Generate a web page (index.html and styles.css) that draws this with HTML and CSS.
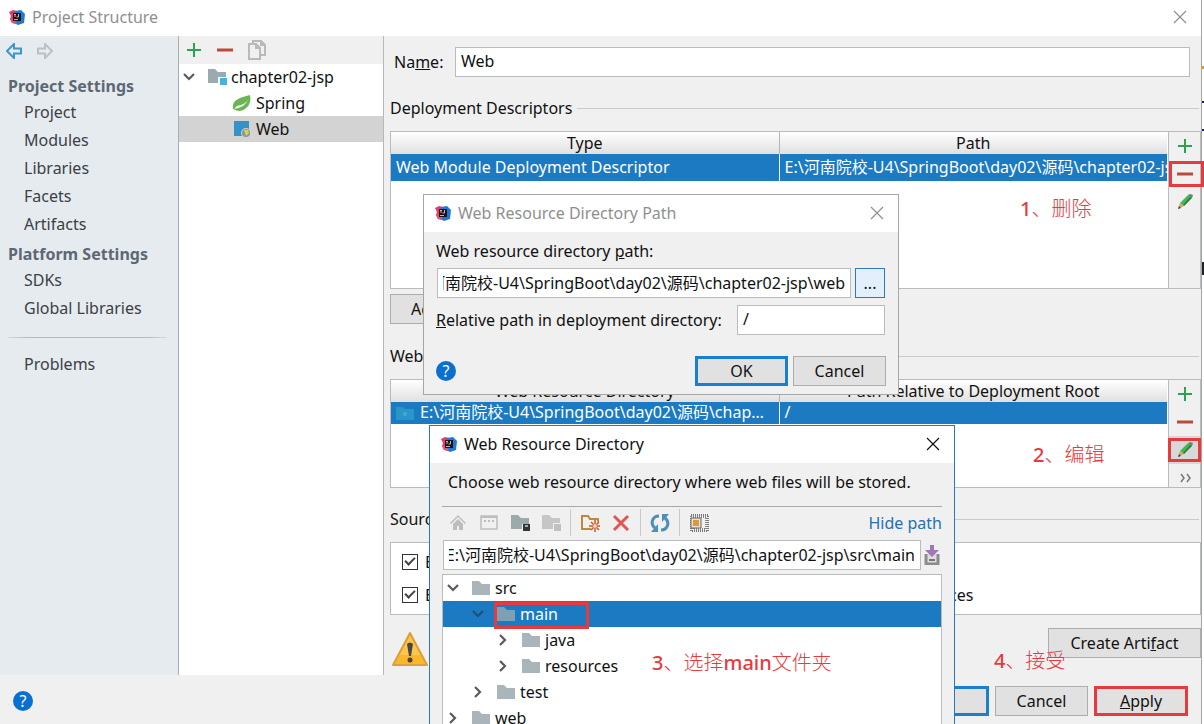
FILE: index.html
```html
<!DOCTYPE html>
<html lang="en">
<head>
<meta charset="utf-8">
<title>Project Structure</title>
<link rel="stylesheet" href="styles.css">
</head>
<body>
<svg class="sprite" aria-hidden="true">
  <symbol id="logo" viewBox="0 0 16 16">
    <path d="M0 3l4-2 4 1v13l-5-1-2-4 1-3z" fill="#e8386d"/>
    <path d="M6 2l6-1 4 4-1 9-6 2-4-2z" fill="#1f78d8"/>
    <path d="M1 10l4-1 3 6-5-1z" fill="#d8577c"/>
    <path d="M4 4h8v8H4z" fill="#1b1416"/>
    <path d="M5 5.500h2M6 5v3M9.500 5v3h-2M5 10.500h4" stroke="#c9b3a5" fill="none"/>
  </symbol>
  <symbol id="close" viewBox="0 0 14 14"><path d="M1 1l12 12M13 1L1 13" stroke="currentColor" stroke-width="1.2" fill="none"/></symbol>
  <symbol id="plus" viewBox="0 0 16 16"><path d="M8 1v14M1 8h14" stroke="#2fa04f" stroke-width="2" fill="none"/></symbol>
  <symbol id="minus" viewBox="0 0 16 16"><path d="M0 8h16" stroke="#bb4a38" stroke-width="3" fill="none"/></symbol>
  <symbol id="pencil" viewBox="0 0 16 16">
    <path d="M3 9l8-8 4 2-8 9z" fill="#45b556"/><path d="M11 1l2-1 3 1-1 3z" fill="#5b8a70"/>
    <path d="M6 11l7-8 2 1-8 8z" fill="#2b7f3c"/><path d="M1 15l2-6 4 3z" fill="#c9a86c"/><path d="M1 15l1-3 2 2z" fill="#444"/>
  </symbol>
  <symbol id="folder" viewBox="0 0 18 14"><path d="M0 0h7l3 3h8v11H0z" fill="currentColor"/></symbol>
  <symbol id="down" viewBox="0 0 12 8"><path d="M1 1l5 5 5-5" stroke="currentColor" stroke-width="2.2" fill="none"/></symbol>
  <symbol id="right" viewBox="0 0 8 12"><path d="M1 1l5 5-5 5" stroke="currentColor" stroke-width="2.2" fill="none"/></symbol>
  <symbol id="arrow" viewBox="0 0 16 16"><path d="M1 8l7-7v4.500h7v5H8V15z" stroke="currentColor" stroke-width="2" fill="none"/></symbol>
</svg>

<div class="window">
  <header class="titlebar inactive">
    <svg class="logo"><use href="#logo"/></svg>
    <h1>Project Structure</h1>
    <button class="close" aria-label="Close"><svg><use href="#close"/></svg></button>
  </header>

  <div class="columns">
    <nav class="sidebar">
      <div class="history">
        <button class="back" aria-label="Back"><svg><use href="#arrow"/></svg></button>
        <button class="forward" aria-label="Forward"><svg><use href="#arrow"/></svg></button>
      </div>
      <h2>Project Settings</h2>
      <a href="#project">Project</a>
      <a href="#modules">Modules</a>
      <a href="#libraries">Libraries</a>
      <a href="#facets">Facets</a>
      <a href="#artifacts">Artifacts</a>
      <h2>Platform Settings</h2>
      <a href="#sdks">SDKs</a>
      <a href="#global">Global Libraries</a>
      <hr>
      <a href="#problems">Problems</a>
    </nav>

    <section class="facets">
      <div class="facet-tools">
        <button aria-label="Add"><svg><use href="#plus"/></svg></button>
        <button aria-label="Remove"><svg><use href="#minus"/></svg></button>
        <button aria-label="Copy"><svg class="copy" viewBox="0 0 18 20"><path d="M5 4V1h8l4 4v10h-4M1 4h7l4 4v11H1zM8 4v4h4M13 1v4h4" stroke="#b9b9b9" stroke-width="2" fill="none"/></svg></button>
      </div>
      <ul class="tree">
        <li class="module"><svg class="chev-down"><use href="#down"/></svg>
          <svg class="icon" viewBox="0 0 20 18"><path d="M0 1h7l3 3h8v11H0z" fill="#9ba9b0"/><path d="M10 9h10v9H10z" fill="#fff"/><path d="M12 10h7v7h-7z" fill="#40b6d8"/></svg>
          <span>chapter02-jsp</span></li>
        <li class="facet"><svg class="icon" viewBox="0 0 20 18"><path d="M1 15C0 5 8 4 18 1c2 8-3 15-10 16-3 0-5-1-7-2z" fill="#6bb553"/><path d="M2 15c5-1 10-2 14-9-3 4-7 5-11 6" fill="#fff"/></svg>
          <span>Spring</span></li>
        <li class="facet selected"><svg class="icon" viewBox="0 0 20 18"><path d="M2 1h15v15H2z" fill="#3592c4"/><circle cx="14" cy="13" r="5" fill="#d2d2d2"/><circle cx="14" cy="13" r="4" fill="#7f9f8a"/><path d="M12 10l4 0 1 3-3 3-1-3z" fill="#e5c860"/></svg>
          <span>Web</span></li>
      </ul>
    </section>

    <main class="editor">
      <div class="name-row">
        <label for="facet-name">Na<u>m</u>e:</label>
        <input id="facet-name" type="text" value="Web">
      </div>

      <h3><span>Deployment Descriptors</span></h3>
      <div class="frame descriptors">
        <div class="table-area">
          <table>
            <thead><tr><th>Type</th><th>Path</th></tr></thead>
            <tbody><tr><td>Web Module Deployment Descriptor</td><td>E:\河南院校-U4\SpringBoot\day02\源码\chapter02-jsp\web\WEB-INF\web.xml</td></tr></tbody>
          </table>
        </div>
        <div class="side-tools">
          <button aria-label="Add descriptor"><svg><use href="#plus"/></svg></button>
          <button class="marked wide" aria-label="Remove descriptor"><svg><use href="#minus"/></svg></button>
          <button aria-label="Edit descriptor"><svg><use href="#pencil"/></svg></button>
        </div>
      </div>
      <button class="btn add-descriptor">Add Application Server specific descriptor...</button>

      <h3><span>Web Resource Directories</span></h3>
      <div class="frame resources">
        <div class="table-area">
          <table>
            <thead><tr><th>Web Resource Directory</th><th>Path Relative to Deployment Root</th></tr></thead>
            <tbody><tr><td><svg class="web-folder" viewBox="0 0 18 14"><path d="M0 1h7l2 2h9v11H0z" fill="#2a95c8"/><circle cx="9" cy="8" r="2" fill="#43a9d6"/></svg>E:\河南院校-U4\SpringBoot\day02\源码\chapter02-jsp\web</td><td>/</td></tr></tbody>
          </table>
        </div>
        <div class="side-tools">
          <button aria-label="Add directory"><svg><use href="#plus"/></svg></button>
          <button aria-label="Remove directory"><svg><use href="#minus"/></svg></button>
          <button class="marked active" aria-label="Edit directory"><svg><use href="#pencil"/></svg></button>
          <button aria-label="More"><svg viewBox="0 0 16 16"><path d="M4 4l3 4-3 4M10 4l3 4-3 4" stroke="#777" stroke-width="1.500" fill="none"/></svg></button>
        </div>
      </div>

      <h3><span>Source Roots</span></h3>
      <div class="roots">
        <label><input type="checkbox" checked><span>E:\河南院校-U4\SpringBoot\day02\源码\chapter02-jsp\src\main\java</span></label>
        <label><input type="checkbox" checked><span>E:\河南院校-U4\SpringBoot\day02\源码\chapter02-jsp\src\main\resources</span></label>
      </div>

      <div class="artifact-row">
        <svg class="warning" viewBox="0 0 36 36"><path d="M18 2L35 34H1z" fill="#f8b72d" stroke="#dda03b" stroke-width="2" stroke-linejoin="round"/><path d="M18 5L8 24h20z" fill="#fbc750"/><path d="M15 13q3-3 6 0l-2 12h-2z" fill="#4b4440"/><circle cx="18" cy="29" r="2.500" fill="#4b4440"/></svg>
        <button class="btn create">Create Arti<u>f</u>act</button>
      </div>
    </main>
  </div>

  <footer class="actions">
    <button class="help" aria-label="Help">?</button>
    <button class="btn default">OK</button>
    <button class="btn">Cancel</button>
    <button class="btn apply"><u>A</u>pply</button>
  </footer>
</div>

<section class="dialog path-dialog" role="dialog" aria-labelledby="path-title">
  <header class="titlebar inactive">
    <svg class="logo"><use href="#logo"/></svg>
    <h1 id="path-title">Web Resource Directory Path</h1>
    <button class="close" aria-label="Close"><svg><use href="#close"/></svg></button>
  </header>
  <div class="dialog-body">
    <label for="res-path">Web resource directory <u>p</u>ath:</label>
    <div class="field-row">
      <input id="res-path" class="scrolled" type="text" value="E:\河南院校-U4\SpringBoot\day02\源码\chapter02-jsp\web">
      <button class="browse" aria-label="Browse">...</button>
    </div>
    <div class="field-row">
      <label for="rel-path"><u>R</u>elative path in deployment directory:</label>
      <input id="rel-path" class="relative-path" type="text" value="/">
    </div>
    <div class="dialog-actions">
      <button class="help" aria-label="Help">?</button>
      <button class="btn default">OK</button>
      <button class="btn">Cancel</button>
    </div>
  </div>
</section>

<section class="dialog chooser" role="dialog" aria-labelledby="chooser-title">
  <header class="titlebar">
    <svg class="logo"><use href="#logo"/></svg>
    <h1 id="chooser-title">Web Resource Directory</h1>
    <button class="close" aria-label="Close"><svg><use href="#close"/></svg></button>
  </header>
  <div class="chooser-body">
    <p>Choose web resource directory where web files will be stored.</p>
    <div class="chooser-tools">
      <button aria-label="Home"><svg viewBox="0 0 20 18"><path d="M10 1l8 8-1 1-7-7-7 7-1-1zM5 10l5-5 5 5v6h-4v-4H9v4H5z" fill="#bdbdbd"/></svg></button>
      <button aria-label="Desktop"><svg viewBox="0 0 20 18"><path d="M2 2h16v13H2z" stroke="#bdbdbd" stroke-width="1.500" fill="none"/><path d="M2 3h16M5 7h2M9 7h2M13 7h2" stroke="#bdbdbd" stroke-width="2"/></svg></button>
      <button aria-label="Project"><svg viewBox="0 0 20 18"><path d="M1 1h7l3 3h8v11H1z" fill="#9aabab"/><path d="M12 10h8v8h-8z" fill="#f0f0f0"/><path d="M13 10h7v7h-7z" fill="#333"/><path d="M15 11h3v2h-3z" fill="#aaa"/></svg></button>
      <button aria-label="Module"><svg viewBox="0 0 20 18"><path d="M1 1h7l3 3h8v11H1z" fill="#c6c6c6"/><path d="M12 9h8v9h-8z" fill="#f0f0f0"/><path d="M13 10h7v7h-7z" fill="#c0c0c0"/></svg></button>
      <i class="divider"></i>
      <button aria-label="New folder"><svg viewBox="0 0 20 18"><path d="M2 15V2h6l2 3h8v10z" stroke="#b98a3c" stroke-width="2" fill="none"/><circle cx="15" cy="12" r="5" fill="#f0f0f0"/><path d="M15 6v12M9 12h12M11 8l8 8M19 8l-8 8" stroke="#d0562f" stroke-width="1.500"/><circle cx="15" cy="12" r="2" fill="#f6cfae"/></svg></button>
      <button aria-label="Delete"><svg viewBox="0 0 20 18"><path d="M3 2l14 14M17 2L3 16" stroke="#e35555" stroke-width="3" fill="none"/></svg></button>
      <i class="divider"></i>
      <button aria-label="Refresh"><svg viewBox="0 0 20 18"><path d="M9 2C2 2 0 10 5 14M11 16c7 0 9-8 4-12" stroke="#4a90b8" stroke-width="3" fill="none"/><path d="M8 10v8H1zM12 8V0h7z" fill="#4a90b8"/></svg></button>
      <i class="divider"></i>
      <button aria-label="Show hidden files"><svg viewBox="0 0 20 18"><path d="M2 1h17v16H2z" fill="none" stroke="#777" stroke-width="2" stroke-dasharray="1 1"/><path d="M4 3h13v12H4z" fill="none" stroke="#888" stroke-width="2" stroke-dasharray="1 1"/><path d="M2 4h10v10H2z" fill="#f0e0c4" stroke="#666"/><path d="M4 6h6v6H4z" fill="#d39a4a"/></svg></button>
      <a href="#hide">Hide path</a>
    </div>
    <div class="path-row">
      <input class="scrolled" type="text" aria-label="Path" value="E:\河南院校-U4\SpringBoot\day02\源码\chapter02-jsp\src\main">
      <button aria-label="History"><svg viewBox="0 0 16 20"><path d="M2 9v10h12V9" stroke="#8c8c8c" stroke-width="3" fill="#ddd"/><path d="M5 15h6" stroke="#777" stroke-width="2"/><path d="M6 0h4v5h5l-7 7-7-7h5z" fill="#a077b8"/></svg></button>
    </div>
    <ul class="tree file-tree">
      <li><svg class="chev-down"><use href="#down"/></svg><svg class="folder"><use href="#folder"/></svg><span>src</span></li>
      <li class="level1 chosen"><svg class="chev-down"><use href="#down"/></svg><svg class="folder"><use href="#folder"/></svg><span>main</span></li>
      <li class="level2"><svg class="chev-right"><use href="#right"/></svg><svg class="folder"><use href="#folder"/></svg><span>java</span></li>
      <li class="level2"><svg class="chev-right"><use href="#right"/></svg><svg class="folder"><use href="#folder"/></svg><span>resources</span></li>
      <li class="level1"><svg class="chev-right"><use href="#right"/></svg><svg class="folder"><use href="#folder"/></svg><span>test</span></li>
      <li><svg class="chev-right"><use href="#right"/></svg><svg class="folder"><use href="#folder"/></svg><span>web</span></li>
    </ul>
  </div>
</section>

<p class="note note-delete"><b>1</b>、删除</p>
<p class="note note-edit"><b>2</b>、编辑</p>
<p class="note note-choose"><b>3</b>、选择<b>main</b>文件夹</p>
<p class="note note-accept"><b>4</b>、接受</p>
</body>
</html>
```
FILE: styles.css
```css
*, *::before, *::after { box-sizing: border-box; }

body {
  margin: 0;
  height: 100vh;
  overflow: hidden;
  position: relative;
  color: #111;
  font: 16px/20px "Noto Sans", "Noto Sans CJK SC", sans-serif;
  background: linear-gradient(#fff 66px, #c9a227 66px 69px, #fff 69px 101px, #102060 101px 103px, #fff 103px 129px, #102060 129px 131px, #fff 131px 262px, #222 262px 275px, #fff 275px);
}

h1, h2, h3, p, ul { margin: 0; padding: 0; font-weight: 400; font-size: 16px; }
ul { list-style: none; }
button, input { font: inherit; color: inherit; margin: 0; }
button { padding: 0; border: 0; background: none; display: flex; align-items: center; justify-content: center; flex: none; }
svg { display: block; flex: none; width: 16px; height: 16px; }
.sprite { position: absolute; width: 0; height: 0; }
input[type="text"] {
  height: 30px;
  min-width: 0;
  padding: 0 5px 2px;
  border: 1px solid #b9bcbf;
  background: #fff;
  outline: 0;
}
.scrolled { direction: rtl; text-align: right; }

.window {
  display: flex;
  flex-direction: column;
  height: 100%;
  margin-right: 2px;
  border-right: 1px solid #a5a5a5;
  background: #f0f0f0;
}

.titlebar { display: flex; align-items: center; flex: none; height: 36px; padding: 0 14px 2px 9px; background: #fff; }
.titlebar h1 { flex: 1; margin-left: 7px; }
.titlebar.inactive { color: #8f8f8f; }
.close svg { width: 14px; height: 14px; }

.columns { display: flex; flex: 1; min-height: 0; }

.sidebar { flex: none; width: 179px; background: #e6ebf0; border-right: 1px solid #a9adb0; color: #3b4045; }
.history { display: flex; align-items: center; height: 34px; gap: 15px; padding: 0 0 4px 6px; }
.back { color: #3d94cf; }
.forward { color: #bcc0c3; transform: scaleX(-1); }
.sidebar h2 { padding: 6px 0 2px 8px; font-weight: 700; color: #5d6873; }
.sidebar a { display: block; padding: 4px 0 4px 24px; color: inherit; text-decoration: none; }
.sidebar hr { height: 1px; margin: 15px 11px 12px 8px; border: 0; background: linear-gradient(90deg, #d5dade, #b4babf 12%, #b4babf 88%, #d5dade); }

.facets { flex: none; width: 205px; background: #fff; border-right: 1px solid #b8b8b8; }
.facet-tools { display: flex; align-items: center; gap: 15px; height: 28px; padding-left: 7px; background: #f0f0f0; }
.facet-tools .copy { width: 18px; height: 20px; }
.tree li { display: flex; align-items: center; height: 26px; }
.tree .icon { width: 20px; height: 18px; }
.tree .module { padding-left: 4px; gap: 13px; }
.tree .module span { margin-left: -10px; }
.tree .facet { padding-left: 53px; gap: 4px; }
.tree .selected { background: #d3d3d3; }
.chev-down { width: 12px; height: 8px; color: #5a5a5a; }
.chev-right { width: 8px; height: 12px; margin: 0 2px; color: #5a5a5a; }

.editor { flex: 1; min-width: 0; padding: 11px 0 0 6px; }
.name-row { display: flex; align-items: center; padding: 0 11px 0 4px; }
.name-row label { width: 61px; }
.name-row input { flex: 1; }

.editor h3 { display: flex; align-items: center; gap: 5px; margin: 21px 2px 13px 0; }
.editor h3::after { content: ""; flex: 1; height: 1px; background: #c9cacc; }

.frame { display: flex; border: 1px solid #b9bcbf; background: #fff; }
.descriptors { height: 158px; }
.resources { height: 109px; }
.table-area { flex: 1; min-width: 0; padding-right: 1px; }
table { width: 100%; table-layout: fixed; border-collapse: collapse; }
th, td { padding: 0; white-space: nowrap; overflow: hidden; }
th { height: 22px; font-weight: 400; background: linear-gradient(#fff, #e0e0e0); }
th + th { border-left: 1px solid #b5b5b5; }
td { height: 27px; padding: 0 0 2px 5px; background: #1b7ac1; color: #fff; }
td + td { border-left: 1px solid #fff; }
.resources td { height: 22px; text-overflow: ellipsis; }
.resources td:first-child { padding-right: 9px; }
.web-folder { display: inline-block; width: 18px; height: 14px; margin-right: 6px; vertical-align: -2px; }
.side-tools { display: flex; flex-direction: column; flex: none; width: 32px; border-left: 1px solid #b9bcbf; background: #f0f0f0; }
.side-tools button { height: 28px; position: relative; }
.marked::after { content: ""; position: absolute; inset: 2px -1px; border: 3px solid #e63a3e; }
.marked.wide::after { inset: 1px -4px 1px 0; }
.active { background: #d8d8d8; }

.btn { min-width: 93px; height: 30px; padding: 0 20px; border: 1px solid #adadad; background: #e1e1e1; white-space: pre; }
.btn.default { border: 3px solid #1a7fce; }
.btn.apply { min-width: 94px; border: 3px solid #e63a3e; }
.btn.create { min-width: 153px; }
.add-descriptor { margin: 5px 0 22px; }

.roots { display: flex; flex-direction: column; justify-content: space-around; height: 73px; padding: 3px 11px; border: 1px solid #b9bcbf; background: #fff; }
.roots label { display: flex; align-items: center; gap: 7px; }
input[type="checkbox"] { appearance: none; position: relative; width: 16px; height: 16px; border: 1px solid #333; background: #fff; }
input[type="checkbox"]:checked::after {
  content: "";
  position: absolute;
  left: 2px;
  top: 2px;
  width: 10px;
  height: 6px;
  border: solid #444;
  border-width: 0 0 2px 2px;
  transform: rotate(-45deg);
}

.artifact-row { display: flex; align-items: flex-start; justify-content: space-between; margin-top: 13px; }
.warning { width: 36px; height: 36px; margin: 3px 2px; }

.actions { display: flex; align-items: center; gap: 6px; padding: 11px 13px 8px; }
.help { width: 20px; height: 20px; margin-right: auto; border-radius: 50%; background: #0b6fd0; color: #fff; }

.dialog { position: absolute; display: flex; flex-direction: column; background: #f0f0f0; }
.dialog .titlebar { height: 37px; padding-left: 11px; }
.path-dialog { left: 423px; top: 194px; width: 476px; border: 1px solid #a6a6a6; }
.dialog-body { display: flex; flex-direction: column; gap: 7px; padding: 9px 12px 8px; }
.field-row { display: flex; align-items: center; gap: 4px; padding: 0 1px; }
.field-row > .scrolled { flex: 1; }
.browse { width: 30px; height: 30px; border: 1px solid #2f78bd; background: #e3f0fb; }
.field-row label { flex: 1; margin-left: -1px; white-space: nowrap; }
.relative-path { width: 148px; }
.dialog-actions { display: flex; align-items: center; gap: 5px; margin-top: 14px; }

.chooser { left: 429px; top: 425px; bottom: 0; width: 526px; overflow: hidden; border: 1px solid #2b78b8; border-bottom: 0; }
.chooser-body { display: flex; flex-direction: column; flex: 1; min-height: 0; padding: 9px 12px 0; }
.chooser-body p { padding: 0 6px 14px; white-space: nowrap; }
.chooser-tools { display: flex; align-items: center; gap: 11px; height: 34px; padding: 0 0 2px 6px; border-top: 1px solid #a9a9a9; }
.chooser-tools svg { width: 20px; height: 18px; }
.chooser-tools a { margin-left: auto; color: #2470b3; text-decoration: none; }
.divider { width: 1px; height: 27px; margin: 0 -2px; background: #c9c9c9; }
.path-row { display: flex; align-items: center; gap: 3px; padding-left: 1px; }
.path-row input { flex: 1; }
.path-row button svg { width: 16px; height: 20px; margin-right: 2px; }
.file-tree { flex: 1; min-height: 0; margin-top: 4px; overflow: hidden; border: 1px solid #b9bcbf; border-bottom: 0; background: #fff; }
.file-tree li { padding-left: 4px; }
.file-tree .level1 { padding-left: 29px; }
.file-tree .level2 { padding-left: 54px; }
.folder { width: 18px; height: 14px; margin: 0 5px 0 13px; color: #a9b5bb; }
.chosen { position: relative; background: #1b7ac1; color: #fff; }
.chosen .chev-down { color: #234f72; }
.chosen .folder { color: #7da0b5; }
.chosen::after { content: ""; position: absolute; left: 51px; top: 1px; bottom: -2px; width: 95px; border: 3px solid #e63a3e; }

.note { position: absolute; color: #e63a3e; font: 300 20px/24px "Noto Sans CJK SC", sans-serif; white-space: nowrap; }
.note b { font-family: "Noto Sans", sans-serif; font-weight: 500; }
.note-delete { left: 1020px; top: 196px; }
.note-edit { left: 1033px; top: 442px; }
.note-choose { left: 652px; top: 650px; }
.note-accept { left: 994px; top: 648px; }
```
